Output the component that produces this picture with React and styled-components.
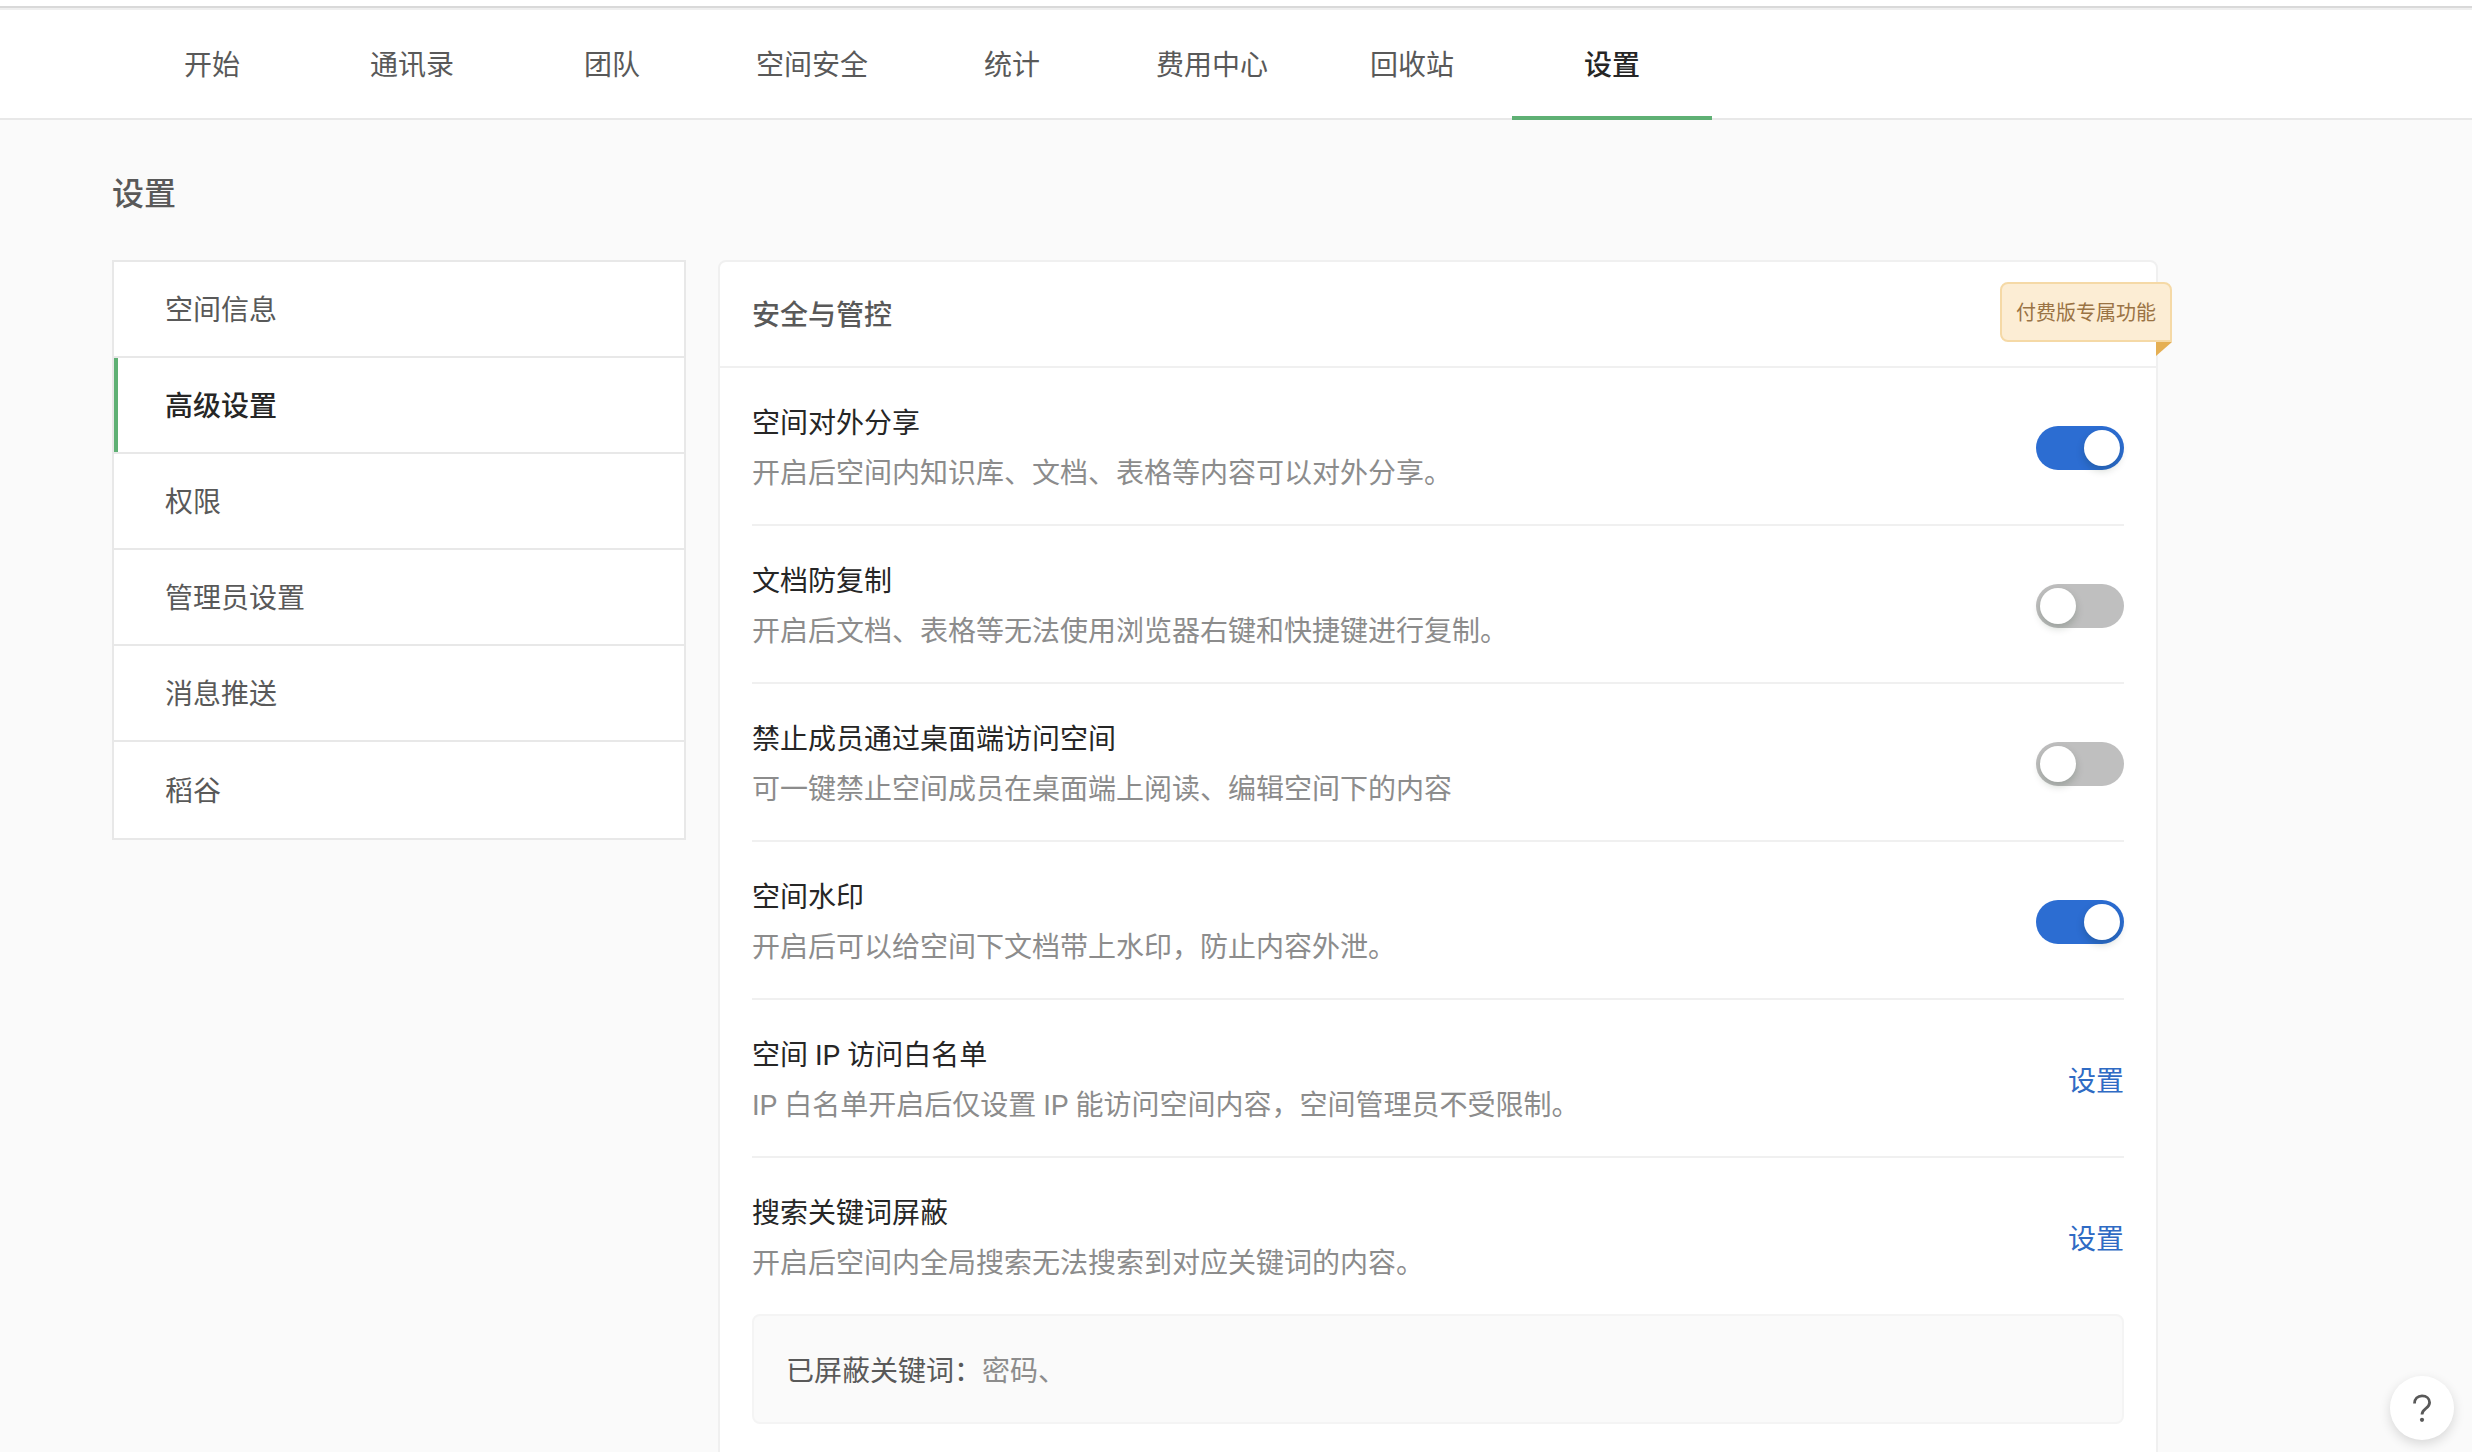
import React, { useState } from "react";
import styled, { createGlobalStyle } from "styled-components";

const GlobalStyle = createGlobalStyle`
  *, *::before, *::after { box-sizing: border-box; }
  html, body { margin: 0; background: #fafafa; }
  body {
    font-family: Roboto, "Noto Sans CJK SC", sans-serif;
    font-size: 28px;
    line-height: 48px;
    color: #262626;
    overflow-x: hidden;
  }
  h1, h2, h3, p, ul { margin: 0; padding: 0; font: inherit; }
  ul { list-style: none; }
  a { color: inherit; text-decoration: none; }
`;

const TopStrip = styled.div`
  height: 10px;
  background: #fff;
  border-bottom: 2px solid #efefef;

  &::after {
    content: "";
    display: block;
    height: 8px;
    border-bottom: 2px solid #d9d9d9;
  }
`;

const Nav = styled.nav`
  display: flex;
  height: 110px;
  padding: 0 112px;
  background: #fff;
  border-bottom: 2px solid #e8e8e8;
`;

const Tab = styled.a`
  display: flex;
  justify-content: center;
  width: 200px;
  height: 110px;
  padding-top: 32px;
  color: ${(p) => (p.$active ? "#262626" : "#595959")};
  font-weight: ${(p) => (p.$active ? 500 : 400)};
  border-bottom: 4px solid ${(p) => (p.$active ? "#5fb074" : "transparent")};
`;

const Page = styled.div`
  max-width: 2270px;
  padding: 50px 112px 0;
`;

const PageTitle = styled.h1`
  margin-bottom: 42px;
  color: #595959;
  font-size: 32px;
  font-weight: 500;
`;

const Columns = styled.div`
  display: grid;
  grid-template-columns: 574px minmax(0, 1fr);
  gap: 32px;
  align-items: start;
`;

const SideMenu = styled.ul`
  background: #fff;
  border: 2px solid #e8e8e8;
`;

const SideItem = styled.li`
  height: 96px;
  border-bottom: 2px solid #e8e8e8;

  &:last-child { border-bottom: 0; }
`;

const SideLink = styled.a`
  display: flex;
  align-items: center;
  height: 100%;
  padding-top: 4px;
  padding-left: 47px;
  border-left: 4px solid ${(p) => (p.$active ? "#5fb074" : "transparent")};
  color: ${(p) => (p.$active ? "#262626" : "#595959")};
  font-weight: ${(p) => (p.$active ? 500 : 400)};
`;

const Panel = styled.section`
  min-height: 1240px;
  background: #fff;
  border: 2px solid #f0f0f0;
  border-radius: 8px;
`;

const PanelHeader = styled.header`
  position: relative;
  display: flex;
  align-items: center;
  height: 106px;
  padding: 4px 32px 0;
  border-bottom: 2px solid #f0f0f0;
`;

const PanelTitle = styled.h2`
  color: #595959;
  font-weight: 500;
`;

const PaidBadge = styled.span`
  position: absolute;
  top: 20px;
  right: -16px;
  height: 60px;
  padding: 0 14px;
  border: 2px solid #f5d9a6;
  border-radius: 8px 8px 0 8px;
  background: #fcedd4;
  color: #9a7344;
  font-size: 20px;
  line-height: 58px;

  &::after {
    content: "";
    position: absolute;
    top: 58px;
    right: -2px;
    width: 16px;
    height: 14px;
    background: #e5af53;
    clip-path: polygon(0 0, 100% 0, 0 100%);
  }
`;

const PanelBody = styled.div`
  padding: 0 32px;
`;

const Setting = styled.div`
  display: flex;
  align-items: center;
  justify-content: space-between;
  height: ${(p) => (p.$last ? 156 : 158)}px;
  padding-top: 4px;
  border-bottom: ${(p) => (p.$last ? "0" : "2px solid #f0f0f0")};
`;

const SettingText = styled.div`
  display: grid;
  gap: 2px;
  padding-top: 2px;
`;

const SettingTitle = styled.h3`
  color: #262626;
`;

const SettingDesc = styled.p`
  color: #8c8c8c;
`;

const Switch = styled.input`
  appearance: none;
  position: relative;
  flex: none;
  width: 88px;
  height: 44px;
  margin: 0;
  border-radius: 22px;
  background: #bfbfbf;
  cursor: pointer;

  &::before {
    content: "";
    position: absolute;
    top: 4px;
    left: 4px;
    width: 36px;
    height: 36px;
    border-radius: 50%;
    background: #fff;
    box-shadow: 0 4px 8px rgba(0, 35, 11, 0.2);
  }

  &:checked { background: #2c6dd2; }
  &:checked::before { left: 48px; }
`;

const SettingAction = styled.button`
  padding: 4px 0 0;
  border: 0;
  background: none;
  color: #2f6bc4;
  font: inherit;
  cursor: pointer;
`;

const Blocked = styled.div`
  height: 110px;
  padding: 32px 32px 0;
  border: 2px solid #f4f4f4;
  border-radius: 8px;
  background: #fafafa;
  color: #8c8c8c;
`;

const BlockedLabel = styled.span`
  color: #595959;
`;

const HelpButton = styled.button`
  position: fixed;
  right: 18px;
  bottom: 12px;
  display: grid;
  place-items: center;
  width: 64px;
  height: 64px;
  padding: 0;
  border: 0;
  border-radius: 50%;
  background: #fff;
  color: #595959;
  box-shadow: 0 4px 12px rgba(0, 0, 0, 0.14);
  cursor: pointer;
`;

const tabs = ["开始", "通讯录", "团队", "空间安全", "统计", "费用中心", "回收站", "设置"];
const menu = ["空间信息", "高级设置", "权限", "管理员设置", "消息推送", "稻谷"];
const settings = [
  { id: "share", title: "空间对外分享", desc: "开启后空间内知识库、文档、表格等内容可以对外分享。", on: true },
  { id: "copy", title: "文档防复制", desc: "开启后文档、表格等无法使用浏览器右键和快捷键进行复制。", on: false },
  { id: "desktop", title: "禁止成员通过桌面端访问空间", desc: "可一键禁止空间成员在桌面端上阅读、编辑空间下的内容", on: false },
  { id: "watermark", title: "空间水印", desc: "开启后可以给空间下文档带上水印，防止内容外泄。", on: true },
  { id: "ip", title: "空间 IP 访问白名单", desc: "IP 白名单开启后仅设置 IP 能访问空间内容，空间管理员不受限制。", action: "设置" },
  { id: "keyword", title: "搜索关键词屏蔽", desc: "开启后空间内全局搜索无法搜索到对应关键词的内容。", action: "设置", last: true },
];

function SettingRow({ id, title, desc, on, action, last }) {
  const [checked, setChecked] = useState(!!on);
  return (
    <Setting $last={last}>
      <SettingText>
        <SettingTitle>
          {action ? title : <label htmlFor={id}>{title}</label>}
        </SettingTitle>
        <SettingDesc>{desc}</SettingDesc>
      </SettingText>
      {action ? (
        <SettingAction type="button">{action}</SettingAction>
      ) : (
        <Switch
          id={id}
          type="checkbox"
          role="switch"
          checked={checked}
          onChange={(e) => setChecked(e.target.checked)}
        />
      )}
    </Setting>
  );
}

export default function App() {
  return (
    <>
      <GlobalStyle />
      <TopStrip />
      <Nav>
        {tabs.map((t) => (
          <Tab key={t} href="#" $active={t === "设置"}>{t}</Tab>
        ))}
      </Nav>
      <Page>
        <PageTitle>设置</PageTitle>
        <Columns>
          <SideMenu>
            {menu.map((m) => (
              <SideItem key={m}>
                <SideLink href="#" $active={m === "高级设置"}>{m}</SideLink>
              </SideItem>
            ))}
          </SideMenu>
          <Panel>
            <PanelHeader>
              <PanelTitle>安全与管控</PanelTitle>
              <PaidBadge>付费版专属功能</PaidBadge>
            </PanelHeader>
            <PanelBody>
              {settings.map((s) => (
                <SettingRow key={s.id} {...s} />
              ))}
              <Blocked>
                <BlockedLabel>已屏蔽关键词：</BlockedLabel>密码、
              </Blocked>
            </PanelBody>
          </Panel>
        </Columns>
      </Page>
      <HelpButton type="button" aria-label="?">
        <svg width="20" height="28" viewBox="0 0 20 28" fill="none" aria-hidden="true">
          <path d="M2.500 9.500C2.500 4.800 5.600 1.800 10 1.800s7.600 2.800 7.600 6.700c0 2.900-1.600 4.300-3.800 6C11.400 16.300 10 17.300 10 20.500" stroke="currentColor" strokeWidth="2.800" />
          <circle cx="10" cy="25.800" r="2.100" fill="currentColor" />
        </svg>
      </HelpButton>
    </>
  );
}
